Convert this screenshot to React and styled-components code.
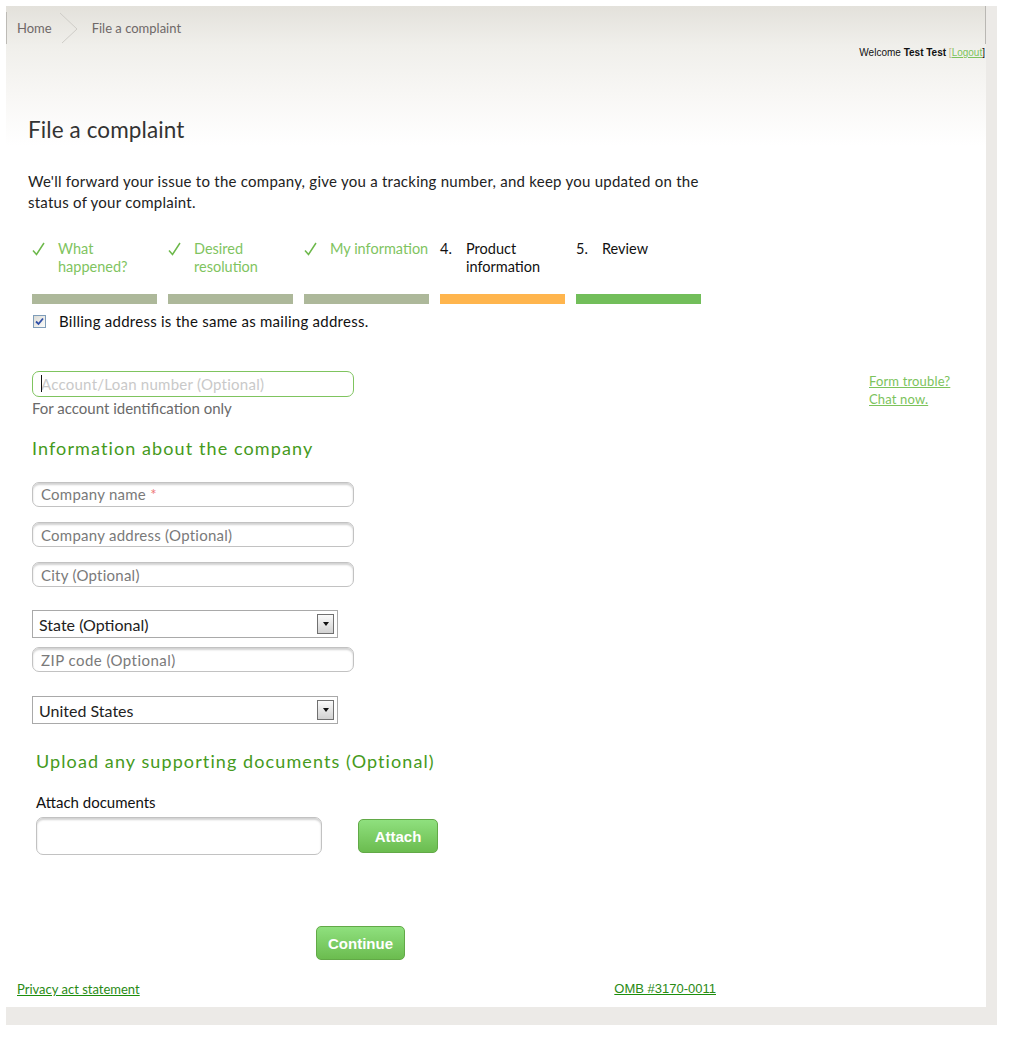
import { createGlobalStyle } from "styled-components";
import styled from "styled-components";

const GlobalStyle = createGlobalStyle`
  html, body {
    margin: 0;
    padding: 0;
    background: #fff;
  }
  body {
    font-family: Lato, "Open Sans", "Liberation Sans", sans-serif;
    color: #222;
  }
  * {
    box-sizing: border-box;
  }
`;

const Frame = styled.div`
  margin: 6px 0 0 6px;
  width: 991px;
  padding: 0 11px 18px 0;
  background: #eceae7;
`;

const Page = styled.div`
  width: 980px;
  background: linear-gradient(
      to bottom,
      #e3e1db 0px,
      #f0efeb 40px,
      #f8f7f5 90px,
      #ffffff 140px
    )
    no-repeat #fff;
  padding-bottom: 11px;
`;

const Header = styled.div`
  height: 38px;
  padding-top: 6px;
  border-right: 1px solid #b9b7b3;
`;

const Breadcrumbs = styled.nav`
  height: 32px;
  border-left: 1px solid #bdbbb6;
  display: flex;
  align-items: center;
  font-size: 13px;
  color: #6f6868;
`;

const Crumb = styled.span`
  padding-left: ${(p) => p.pad || 0}px;
`;

const Chevron = styled.svg`
  width: 20px;
  height: 32px;
  margin: 0 13px 0 7px;
`;

const Welcome = styled.div`
  margin-top: 3px;
  padding-right: 1px;
  text-align: right;
  font-family: "Liberation Sans", Arial, sans-serif;
  font-size: 10px;
  line-height: 12px;
  color: #111;

  b {
    font-weight: bold;
  }
  a {
    color: #7cc35c;
  }
  span {
    color: #c9b98a;
  }
`;

const Content = styled.main`
  padding-left: 22px;
`;

const Title = styled.h1`
  margin: 58px 0 0;
  font-size: 22.5px;
  line-height: 26px;
  font-weight: 400;
  letter-spacing: 0.1px;
  color: #333;
`;

const Intro = styled.p`
  margin: 28px 0 0;
  max-width: 690px;
  font-size: 15px;
  line-height: 21px;
  letter-spacing: 0.25px;
  color: #222;
`;

const Steps = styled.ol`
  list-style: none;
  margin: 27px 0 0 4px;
  padding: 0;
  display: flex;
  gap: 11px;
`;

const Step = styled.li`
  width: 125px;
  height: 64px;
  display: flex;
  flex-direction: column;
`;

const StepLabel = styled.div`
  display: flex;
  font-size: 14.5px;
  line-height: 18px;
  white-space: nowrap;
  color: ${(p) => (p.done ? "#7fc45f" : "#111")};
`;

const StepMark = styled.span`
  width: 26px;
  flex: none;
  color: #111;
`;

const CheckIcon = styled.svg`
  display: block;
  margin-top: 2px;
`;

const StepBar = styled.div`
  margin-top: auto;
  height: 10px;
  background: ${(p) => p.color};
`;

const CheckRow = styled.label`
  margin: 8px 0 0 5px;
  display: flex;
  align-items: center;
  gap: 13px;
  font-size: 15px;
  line-height: 18px;
  letter-spacing: 0.25px;
  color: #111;
`;

const CheckBox = styled.span`
  width: 13px;
  height: 13px;
  border: 1px solid #7f9db9;
  background: linear-gradient(135deg, #dcdcd7, #fbfbf9);
  display: flex;
  align-items: center;
  justify-content: center;
`;

const FormRow = styled.div`
  margin: 41px 0 0 4px;
  display: flex;
`;

const FormCol = styled.div`
  width: 440px;
  display: flex;
  flex-direction: column;
  align-items: flex-start;
`;

const Aside = styled.div`
  margin-left: auto;
  width: 117px;
  padding-top: 1px;
  display: flex;
  flex-direction: column;
  font-size: 13px;
  line-height: 18px;
  letter-spacing: 0.15px;

  a {
    color: #7cc35c;
    align-self: flex-start;
  }
`;

const Field = styled.div`
  position: relative;
  margin-top: ${(p) => p.mt || 0}px;
`;

const TextInput = styled.input`
  display: block;
  width: ${(p) => p.w || 322}px;
  height: ${(p) => p.h || 25}px;
  border: 1px solid ${(p) => (p.active ? "#7fc45f" : "#c2c2c2")};
  border-radius: 7px;
  box-shadow: ${(p) =>
    p.active ? "none" : "inset 0 2px 2px rgba(0, 0, 0, 0.18)"};
  background: #fff;
  padding: 0 8px;
  font-family: Lato, "Open Sans", sans-serif;
  font-size: 15px;
  letter-spacing: 0.25px;
  color: #222;
  outline: none;

  &::placeholder {
    color: ${(p) => (p.faint ? "#c9c9c9" : "#7a7a7a")};
    letter-spacing: ${(p) => (p.spaced ? "0.45px" : "0.25px")};
  }
`;

const Caret = styled.span`
  position: absolute;
  left: 9px;
  top: 4px;
  width: 1px;
  height: 17px;
  background: #111;
`;

const Overlay = styled.span`
  position: absolute;
  left: 9px;
  top: 0;
  line-height: 25px;
  font-size: 15px;
  letter-spacing: 0.25px;
  color: #7a7a7a;
  pointer-events: none;

  em {
    font-style: normal;
    color: #ee7777;
  }
`;

const Hint = styled.div`
  margin-top: 2px;
  font-size: 15px;
  line-height: 18px;
  color: #6a6a6a;
`;

const SectionTitle = styled.h2`
  margin: ${(p) => p.mt}px 0 0;
  font-size: 18px;
  line-height: 24px;
  font-weight: 400;
  letter-spacing: 1.1px;
  color: #459a20;
`;

const Select = styled.div`
  margin-top: ${(p) => p.mt}px;
  width: 306px;
  height: 28px;
  border: 1px solid #a9a9a9;
  background: #fff;
  display: flex;
  align-items: center;
  justify-content: space-between;
  padding: 0 3px 0 6px;
  font-size: 16px;
  color: #222;
`;

const SelectArrow = styled.span`
  width: 17px;
  height: 20px;
  border: 1px solid #707070;
  background: linear-gradient(#fafafa, #d2d2d2);
  display: flex;
  align-items: center;
  justify-content: center;

  &::after {
    content: "";
    border-left: 3.5px solid transparent;
    border-right: 3.5px solid transparent;
    border-top: 4px solid #111;
  }
`;

const Upload = styled.section`
  padding-left: 4px;
`;

const FieldLabel = styled.div`
  margin-top: 20px;
  font-size: 15px;
  line-height: 18px;
  color: #111;
`;

const FileRow = styled.div`
  margin-top: 6px;
  display: flex;
  align-items: center;
  gap: 36px;
`;

const Button = styled.button`
  width: ${(p) => p.w}px;
  height: 34px;
  border: 1px solid #62a947;
  border-radius: 5px;
  background: linear-gradient(#8fe07e, #6bbc4f);
  color: #fff;
  font-family: "Liberation Sans", Arial, sans-serif;
  font-weight: bold;
  font-size: 15px;
  padding: 0;
  cursor: pointer;
`;

const ButtonRow = styled.div`
  margin: 71px 0 0 288px;
`;

const Footer = styled.footer`
  margin-top: 22px;
  padding-left: 11px;
  width: 710px;
  display: flex;
  justify-content: space-between;
  font-size: 13px;
  line-height: 14px;

  a {
    color: #2a8a14;
    text-decoration-color: #1c8f0c;
  }
`;

const Omb = styled.a`
  font-family: "Liberation Sans", Arial, sans-serif;
`;

const steps = [
  { label: ["What", "happened?"], done: true, color: "#adb89a" },
  { label: ["Desired", "resolution"], done: true, color: "#adb89a" },
  { label: ["My information"], done: true, color: "#adb89a" },
  { mark: "4.", label: ["Product", "information"], color: "#ffb54d" },
  { mark: "5.", label: ["Review"], color: "#72be5a" },
];

const App = () => {
  return (
    <>
      <GlobalStyle />
      <Frame>
        <Page>
          <Header>
            <Breadcrumbs>
              <Crumb pad={10}>Home</Crumb>
              <Chevron viewBox="0 0 20 32">
                <polyline
                  points="1,1 18,17 3,31"
                  fill="none"
                  stroke="#cfcdc8"
                  strokeWidth="1"
                />
              </Chevron>
              <Crumb>File a complaint</Crumb>
            </Breadcrumbs>
          </Header>
          <Welcome>
            Welcome <b>Test Test</b> <span>[</span>
            <a href="#">Logout</a>]
          </Welcome>

          <Content>
            <Title>File a complaint</Title>
            <Intro>
              We'll forward your issue to the company, give you a tracking
              number, and keep you updated on the status of your complaint.
            </Intro>

            <Steps>
              {steps.map((s) => (
                <Step key={s.label.join(" ")}>
                  <StepLabel done={s.done}>
                    <StepMark>
                      {s.done ? (
                        <CheckIcon width="13" height="14" viewBox="0 0 13 14">
                          <path
                            d="M1 8.5 L4.5 12.5 L12 1"
                            fill="none"
                            stroke="#6cb84a"
                            strokeWidth="1.5"
                          />
                        </CheckIcon>
                      ) : (
                        s.mark
                      )}
                    </StepMark>
                    <span>
                      {s.label.map((l, i) => (
                        <div key={i}>{l}</div>
                      ))}
                    </span>
                  </StepLabel>
                  <StepBar color={s.color} />
                </Step>
              ))}
            </Steps>

            <CheckRow>
              <CheckBox>
                <svg width="9" height="9" viewBox="0 0 9 9">
                  <path
                    d="M1 4.5 L3.5 7 L8 1.5"
                    fill="none"
                    stroke="#2f4fa8"
                    strokeWidth="1.8"
                  />
                </svg>
              </CheckBox>
              Billing address is the same as mailing address.
            </CheckRow>

            <FormRow>
              <FormCol>
                <Field>
                  <TextInput
                    active
                    faint
                    h={26}
                    placeholder="Account/Loan number (Optional)"
                  />
                  <Caret />
                </Field>
                <Hint>For account identification only</Hint>

                <SectionTitle mt={19}>Information about the company</SectionTitle>
                <Field mt={22}>
                  <TextInput />
                  <Overlay>
                    Company name <em>*</em>
                  </Overlay>
                </Field>
                <Field mt={15}>
                  <TextInput placeholder="Company address (Optional)" />
                </Field>
                <Field mt={15}>
                  <TextInput placeholder="City (Optional)" />
                </Field>
                <Select mt={23}>
                  State (Optional)
                  <SelectArrow />
                </Select>
                <Field mt={9}>
                  <TextInput spaced placeholder="ZIP code (Optional)" />
                </Field>
                <Select mt={24}>
                  United States
                  <SelectArrow />
                </Select>

                <Upload>
                  <SectionTitle mt={25}>
                    Upload any supporting documents (Optional)
                  </SectionTitle>
                  <FieldLabel>Attach documents</FieldLabel>
                  <FileRow>
                    <TextInput w={286} h={38} />
                    <Button w={80}>Attach</Button>
                  </FileRow>
                </Upload>
              </FormCol>
              <Aside>
                <a href="#">Form trouble?</a>
                <a href="#">Chat now.</a>
              </Aside>
            </FormRow>

            <ButtonRow>
              <Button w={89}>Continue</Button>
            </ButtonRow>
          </Content>

          <Footer>
            <a href="#">Privacy act statement</a>
            <Omb href="#">OMB #3170-0011</Omb>
          </Footer>
        </Page>
      </Frame>
    </>
  );
};

export default App;
